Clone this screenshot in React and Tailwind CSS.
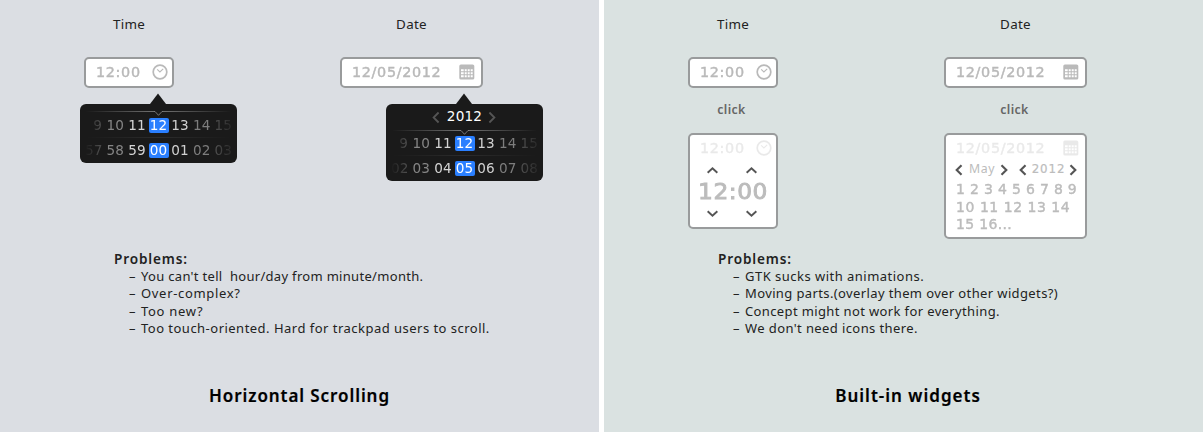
import React from "react";
import clsx from "clsx";

const DIGITS = "font-['DejaVu_Sans',sans-serif]";

function ClockIcon() {
  return (
    <svg className="mr-[-1.5px] h-4 w-4 shrink-0" viewBox="0 0 16 16" fill="none" stroke="#b9b9b9">
      <circle cx="8" cy="8" r="6.8" strokeWidth="1.7" />
      <path d="M5.2 5.4 7.9 8 11.2 4.8" strokeWidth="1.1" />
    </svg>
  );
}

function CalendarIcon() {
  return (
    <svg className="h-4 w-4 shrink-0" viewBox="0 0 16 16" fill="none">
      <rect x="0.3" y="0.5" width="15" height="15" rx="1.6" fill="#bababa" />
      <path
        d="M2 5.3h2.7v2H2zM5.7 5.3h2v2h-2zM8.7 5.3h2v2h-2zM11.7 5.3h2v2h-2zM2 8.3h2.7v2H2zM5.7 8.3h2v2h-2zM8.7 8.3h2v2h-2zM11.7 8.3h2v2h-2zM2 11.3h2.7v2H2zM5.7 11.3h2v2h-2zM8.7 11.3h2v2h-2zM11.7 11.3h2v2h-2z"
        fill="#fff"
      />
    </svg>
  );
}

const CHEVRONS = {
  up: "M1.5 8 6.5 3.4 11.5 8",
  down: "M1.5 3.4 6.5 8 11.5 3.4",
  left: "M8.6 1.2 3.6 6.2 8.6 11.2",
  right: "M3.4 1.2 8.4 6.2 3.4 11.2",
};

function Chevron({ dir, className }) {
  return (
    <svg className={clsx("shrink-0", className)} viewBox="0 0 13 12.4" fill="none" stroke="currentColor">
      <path d={CHEVRONS[dir]} />
    </svg>
  );
}

function FieldContent({ value, icon, faded }) {
  return (
    <div className={clsx("flex h-[26px] items-center justify-between pl-[10px] pr-[6px]", faded && "opacity-30")}>
      <span
        className={clsx(
          DIGITS,
          "origin-left scale-x-[1.09] pt-px text-[13.2px] leading-none tracking-[0.6px] text-[#b9b9b9] [-webkit-text-stroke:0.4px_#b9b9b9]"
        )}
      >
        {value}
      </span>
      {icon}
    </div>
  );
}

function Box({ className, children }) {
  return (
    <div className={clsx("shrink-0 rounded-[5px] border-2 border-[#999b9c] bg-white", className)}>{children}</div>
  );
}

const SHADES = [
  "text-[#4a4a4a]",
  "text-[#858585]",
  "text-[#d4d4d4]",
  "text-white",
  "text-[#d0d0d0]",
  "text-[#7d7d7d]",
  "text-[#4c4c4c]",
];

function Wheel({ items, lead }) {
  return (
    <div className="mx-[6px] flex h-[15px] justify-center overflow-hidden">
      <div className="flex h-[15px] w-[151.2px] shrink-0 justify-center [mask-image:linear-gradient(to_right,transparent_2px,black_16px,black_134px,transparent_154px)]">
        {items.map((n, i) => (
          <span
            key={n}
            className={clsx(
              DIGITS,
              "flex w-[21.6px] shrink-0 items-center justify-center text-[13.6px] leading-[15px] tracking-[0.1px]",
              SHADES[i],
              lead && i === 0 && "pl-2"
            )}
          >
            {i === 3 ? <b className="w-5 rounded-[2px] bg-[#2a7fff] text-center font-normal">{n}</b> : n}
          </span>
        ))}
      </div>
    </div>
  );
}

function Popover({ year, top, bottom, className }) {
  return (
    <div className={clsx("flex w-[157px] flex-col", className)}>
      <svg className="mr-px h-[11px] w-5 self-center" viewBox="0 0 20 11">
        <path d="M2 11 10 0.5 18 11z" fill="#1a1a1a" />
      </svg>
      <div className={clsx("flex flex-col rounded-[6px] bg-[#1a1a1a]", year ? "h-[77px]" : "h-[59px] pt-[1px]")}>
        {year && (
          <div className="flex h-[23px] items-center justify-center gap-[4px] pt-[3px] text-[#555]">
            <Chevron dir="left" className="h-[13px] w-[13px] [stroke-width:1.8]" />
            <span className={clsx(DIGITS, "text-[13.6px] leading-none tracking-[0.2px] text-white")}>{year}</span>
            <Chevron dir="right" className="h-[13px] w-[13px] [stroke-width:1.8]" />
          </div>
        )}
        <svg
          className={clsx("h-[7px] w-[145px] self-center", year ? "mt-[2px]" : "mt-[5px]")}
          viewBox="0 0 145 7"
          fill="none"
        >
          <defs>
            <linearGradient id="rule" gradientUnits="userSpaceOnUse" x1="0" y1="0" x2="145" y2="0">
              <stop offset="0" stopColor="#fff" stopOpacity="0" />
              <stop offset="0.5" stopColor="#fff" stopOpacity="0.4" />
              <stop offset="1" stopColor="#fff" stopOpacity="0" />
            </linearGradient>
          </defs>
          <path d="M0 1.5H69L72.5 5.3 76 1.5H145" stroke="url(#rule)" />
        </svg>
        <div className={year ? "" : "mt-[1px]"}>
          <Wheel items={top} lead />
        </div>
        <div className="mx-[6px] mt-[4px] mb-[5px] h-px bg-linear-to-r from-transparent via-[#2c2c2c] to-transparent" />
        <Wheel items={bottom} />
      </div>
    </div>
  );
}

function Column({ label, value, icon, width, className, children }) {
  return (
    <div className={clsx("flex shrink-0 flex-col items-start", className)}>
      <div className={clsx("flex flex-col items-center", width)}>
        <h3 className="h-[41px] text-[13.4px] leading-[17px] tracking-[0.3px]">{label}</h3>
        <Box className={clsx("h-[31px]", width)}>
          <FieldContent value={value} icon={icon} />
        </Box>
      </div>
      {children}
    </div>
  );
}

function Panel({ title, titleTracking, problems, className, children }) {
  return (
    <section className={clsx("flex h-[432px] w-[599px] flex-col overflow-hidden pt-4", className)}>
      <div className="flex h-[234px] pl-[84px]">{children}</div>
      <div className="h-[135px] pl-[114px] leading-[17.6px]">
        <h2 className="text-[13.6px] font-semibold tracking-[0.85px]">Problems:</h2>
        <ul className="pl-[15px] text-[13px] whitespace-pre">
          {problems.map(([text, tracking]) => (
            <li key={text} className="flex">
              <span className="w-[12px]">–</span>
              <span className={tracking}>{text}</span>
            </li>
          ))}
        </ul>
      </div>
      <h1
        className={clsx(
          "text-center text-[17px] leading-[22px] font-semibold text-black [-webkit-text-stroke:0.2px_black]",
          titleTracking
        )}
      >
        {title}
      </h1>
    </section>
  );
}

function Click({ width }) {
  return (
    <div
      className={clsx(
        "flex h-[45px] items-center justify-center pl-px text-[12.3px] font-semibold tracking-[0.35px] text-[#666]",
        width
      )}
    >
      click
    </div>
  );
}

function Digits({ className, children }) {
  return <span className={clsx(DIGITS, "text-[#bcbcbc]", className)}>{children}</span>;
}

export default function App() {
  const hours = ["9", "10", "11", "12", "13", "14", "15"];
  return (
    <main className="flex h-[432px] w-[1203px] justify-between bg-white font-['Noto_Sans',sans-serif] text-[#222]">
      <Panel
        className="bg-[#dbdee3]"
        title="Horizontal Scrolling"
        titleTracking="tracking-[0.92px]"
        problems={[
          ["You can't tell  hour/day from minute/month.", "tracking-[0.31px]"],
          ["Over-complex?", "tracking-[0.68px]"],
          ["Too new?", "tracking-[0.7px]"],
          ["Too touch-oriented. Hard for trackpad users to scroll.", "tracking-[0.48px]"],
        ]}
      >
        <Column label="Time" value="12:00" icon={<ClockIcon />} width="w-[90px]" className="w-[256px]">
          <Popover className="-ml-1 mt-[5px]" top={hours} bottom={["57", "58", "59", "00", "01", "02", "03"]} />
        </Column>
        <Column label="Date" value="12/05/2012" icon={<CalendarIcon />} width="w-[143px]">
          <Popover
            className="mt-[5px] ml-[46px]"
            year="2012"
            top={hours}
            bottom={["02", "03", "04", "05", "06", "07", "08"]}
          />
        </Column>
      </Panel>

      <Panel
        className="bg-[#dae2e1]"
        title="Built-in widgets"
        titleTracking="pl-[9px] tracking-[1px]"
        problems={[
          ["GTK sucks with animations.", "tracking-[0.48px]"],
          ["Moving parts.(overlay them over other widgets?)", "tracking-[0.38px]"],
          ["Concept might not work for everything.", "tracking-[0.37px]"],
          ["We don't need icons there.", "tracking-[0.4px]"],
        ]}
      >
        <Column label="Time" value="12:00" icon={<ClockIcon />} width="w-[90px]" className="w-[256px]">
          <Click width="w-[86px]" />
          <Box className="flex h-[96px] w-[90px] flex-col">
            <FieldContent value="12:00" icon={<ClockIcon />} faded />
            <div className="flex h-[14px] justify-between pt-[4px] pr-[18px] pl-4 text-[#555]">
              <Chevron dir="up" className="h-3 w-[13px] [stroke-width:2]" />
              <Chevron dir="up" className="h-3 w-[13px] [stroke-width:2]" />
            </div>
            <Digits className="flex h-[31px] scale-x-[1.06] items-center justify-center pt-[2px] text-[22px] leading-none tracking-[0.5px] [-webkit-text-stroke:0.9px_#bcbcbc]">
              12:00
            </Digits>
            <div className="flex justify-between pt-[2px] pr-[18px] pl-4 text-[#555]">
              <Chevron dir="down" className="h-3 w-[13px] [stroke-width:2]" />
              <Chevron dir="down" className="h-3 w-[13px] [stroke-width:2]" />
            </div>
          </Box>
        </Column>
        <Column label="Date" value="12/05/2012" icon={<CalendarIcon />} width="w-[143px]">
          <Click width="w-[140px]" />
          <Box className="flex h-[106px] w-[143px] flex-col">
            <FieldContent value="12/05/2012" icon={<CalendarIcon />} faded />
            <div className="flex h-[18px] items-center pl-[7px] text-[#555]">
              <Chevron dir="left" className="h-3 w-[13px] [stroke-width:2.2]" />
              <span className="w-[32px] pb-[2px] text-center text-[12.3px] leading-none tracking-[0.6px] text-[#bcbcbc]">
                May
              </span>
              <Chevron dir="right" className="h-3 w-[13px] [stroke-width:2.2]" />
              <Chevron dir="left" className="ml-[6px] h-3 w-[13px] [stroke-width:2.2]" />
              <Digits className="w-[37px] text-center text-[11.8px] leading-none tracking-[0.9px] [-webkit-text-stroke:0.2px_#bcbcbc]">
                2012
              </Digits>
              <Chevron dir="right" className="h-3 w-[13px] [stroke-width:2.2]" />
            </div>
            <Digits className="origin-left scale-x-[1.06] pt-[2px] pl-[9.5px] text-[13.2px] leading-[17.7px] tracking-[0.3px] whitespace-nowrap [-webkit-text-stroke:0.4px_#bcbcbc]">
              1 2 3 4 5 6 7 8 9
              <br />
              <span className="tracking-[0.5px]">10 11 12 13 14</span>
              <br />
              15 16...
            </Digits>
          </Box>
        </Column>
      </Panel>
    </main>
  );
}
